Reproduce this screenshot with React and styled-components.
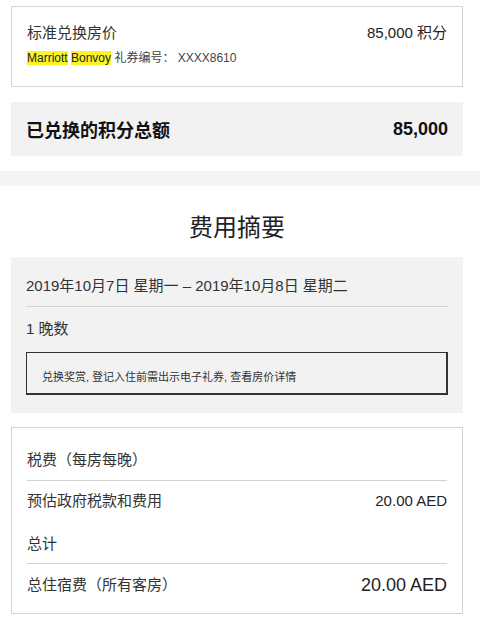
import styled, { createGlobalStyle } from "styled-components";

const GlobalStyle = createGlobalStyle`
  body {
    margin: 0;
    background: #fff;
    font-family: "Liberation Sans", "Noto Sans CJK SC", sans-serif;
    color: #333;
  }
`;

const Section = styled.section`
  padding: ${(p) => p.$pad};
`;

const Band = styled.div`
  height: 15px;
  background: #f4f4f4;
`;

const OutlineCard = styled.div`
  border: 1px solid #d4d4d4;
  padding: ${(p) => p.$pad || "15px"};
  margin-top: ${(p) => p.$top || 0}px;
`;

const GrayCard = styled.div`
  background: #f2f2f2;
  padding: ${(p) => p.$pad || "0 15px"};
  margin-top: ${(p) => p.$top || 0}px;
`;

const Row = styled.div`
  display: flex;
  justify-content: space-between;
  align-items: center;
  height: 20px;
  font-size: 15px;
  line-height: 20px;
  margin-top: ${(p) => p.$top || 0}px;
  color: #333;
`;

const Value = styled.span`
  font-size: ${(p) => p.$size || 15}px;
  color: #222;
`;

const VoucherLine = styled.div`
  margin-top: 6px;
  font-size: 12px;
  line-height: 18px;
  color: #444;
`;

const Mark = styled.span`
  background: #fbf527;
  color: #222;
`;

const TotalRow = styled.div`
  display: flex;
  justify-content: space-between;
  align-items: center;
  height: 54px;
  font-size: 18px;
  font-weight: 700;
  color: #111;
`;

const Title = styled.h2`
  margin: 0;
  text-align: center;
  font-size: 24px;
  line-height: 32px;
  font-weight: 400;
  color: #222;
`;

const Divider = styled.hr`
  border: 0;
  border-top: 1px solid #d2d2d2;
  margin: ${(p) => p.$m};
`;

const Notice = styled.div`
  margin-top: 13px;
  height: 43px;
  box-sizing: border-box;
  border: 1px solid #333;
  border-bottom-width: 2px;
  border-right-width: 2px;
  padding: 13px 0 0 15px;
  font-size: 11px;
  line-height: 22px;
  color: #333;
`;

export default function App() {
  return (
    <>
      <GlobalStyle />
      <Section $pad="6px 17px 15px 11px">
        <OutlineCard $pad="16px 15px 19px">
          <Row>
            <span>标准兑换房价</span>
            <Value>85,000 积分</Value>
          </Row>
          <VoucherLine>
            <Mark>Marriott</Mark> <Mark>Bonvoy</Mark> 礼券编号： XXXX8610
          </VoucherLine>
        </OutlineCard>
        <GrayCard $top={15}>
          <TotalRow>
            <span>已兑换的积分总额</span>
            <span>85,000</span>
          </TotalRow>
        </GrayCard>
      </Section>
      <Band />
      <Section $pad="26px 17px 9px 11px">
        <Title>费用摘要</Title>
        <GrayCard $top={13} $pad="19px 15px 18px">
          <Row>2019年10月7日 星期一 – 2019年10月8日 星期二</Row>
          <Divider $m="10px 0 0" />
          <Row $top={12}>1 晚数</Row>
          <Notice>兑换奖赏, 登记入住前需出示电子礼券, 查看房价详情</Notice>
        </GrayCard>
        <OutlineCard $top={14} $pad="22px 15px 18px">
          <Row>税费（每房每晚）</Row>
          <Divider $m="10px 0 0" />
          <Row $top={10}>
            <span>预估政府税款和费用</span>
            <Value>20.00 AED</Value>
          </Row>
          <Row $top={23}>总计</Row>
          <Divider $m="9px 0 0" />
          <Row $top={11}>
            <span>总住宿费（所有客房）</span>
            <Value $size={18}>20.00 AED</Value>
          </Row>
        </OutlineCard>
      </Section>
    </>
  );
}
